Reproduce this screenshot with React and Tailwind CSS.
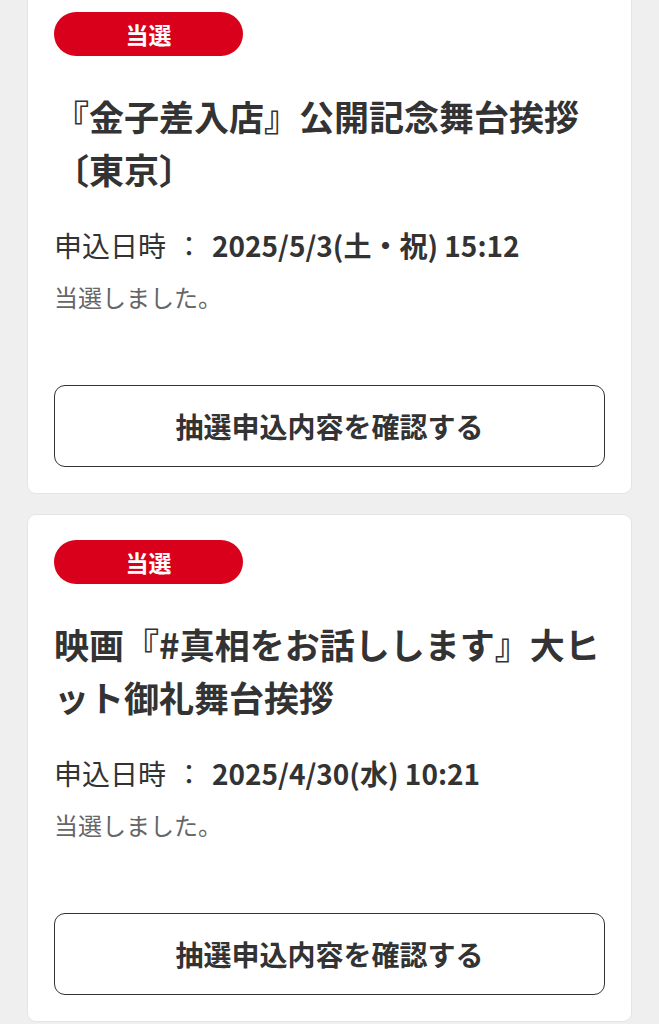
import React from "react";

const items = [
  {
    title: "『金子差入店』公開記念舞台挨拶〔東京〕",
    date: "2025/5/3(土・祝) 15:12",
  },
  {
    title: "映画『#真相をお話しします』大ヒット御礼舞台挨拶",
    date: "2025/4/30(水) 10:21",
  },
];

function Card({ item }) {
  return (
    <div className="bg-white rounded-[9px] border border-[#e4e4e4] pt-[25px] pb-[26px] pl-[26px] pr-[26px]">
      <div className="w-[189px] h-[44px] rounded-full bg-[#d9001b] flex items-center justify-center text-white text-[23px] font-bold leading-none">
        当選
      </div>
      <h2 className="mt-[33px] text-[35px] leading-[53px] font-bold text-[#333333] tracking-normal">
        {item.title}
      </h2>
      <div className="mt-[30px] flex items-center text-[28px] leading-[40px] text-[#333333]">
        <span>申込日時</span>
        <span className="ml-[9px] mr-[9px]">：</span>
        <span className="font-bold">{item.date}</span>
      </div>
      <p className="mt-[12px] text-[24px] leading-[40px] text-[#666666]">当選しました。</p>
      <button className="mt-[68px] w-full h-[82px] rounded-[11px] border border-[#333333] bg-white flex items-center justify-center text-[28px] font-bold text-[#333333]">
        抽選申込内容を確認する
      </button>
    </div>
  );
}

export default function App() {
  return (
    <div
      className="min-h-screen bg-[#efefef] px-[27px] overflow-hidden"
      style={{ fontFamily: '"Noto Sans CJK JP", "Noto Sans", sans-serif' }}
    >
      <div className="mt-[-14px] flex flex-col gap-[20px] pb-[40px]">
        {items.map((it, i) => (
          <Card key={i} item={it} />
        ))}
      </div>
    </div>
  );
}
